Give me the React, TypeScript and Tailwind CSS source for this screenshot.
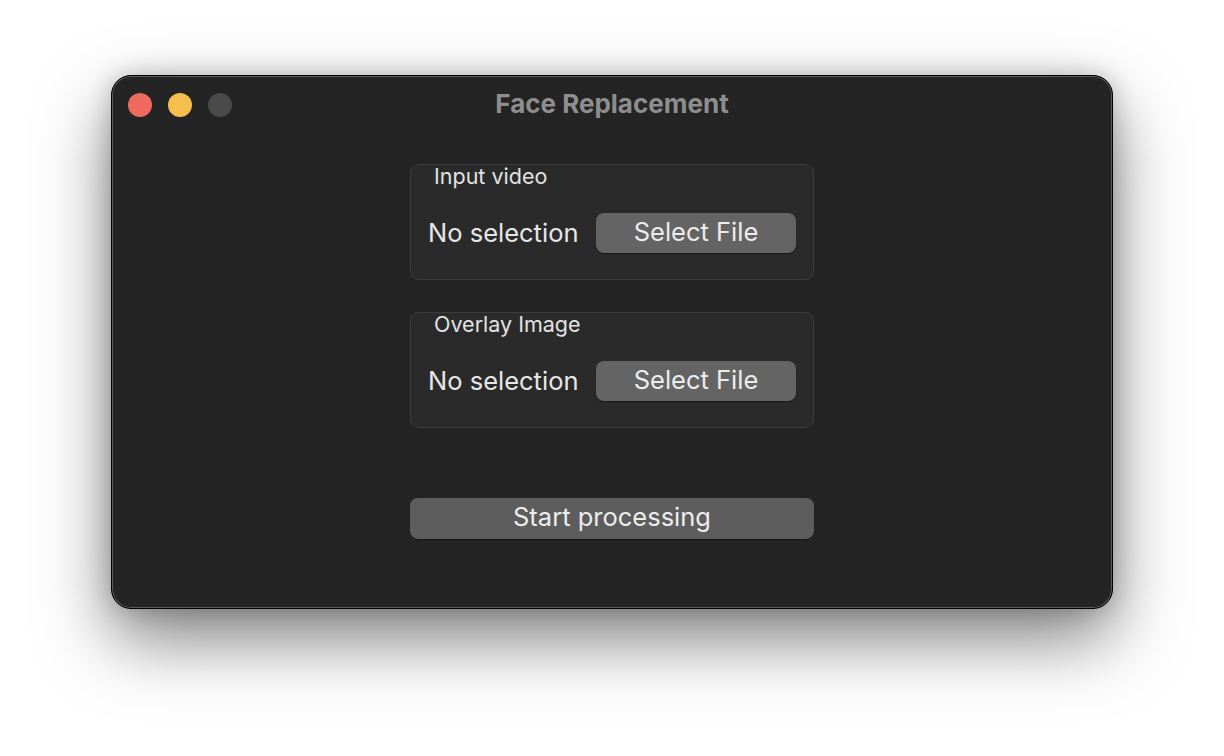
import React from "react";

function Group({ label }: { label: string }) {
  return (
    <div className="w-[404px] h-[116px] rounded-[9px] border border-[#3d3d3d] bg-[#2a2a2a] flex flex-col">
      <div className="h-[24px] pl-[23px] text-[21.5px] leading-[22px] text-[#e2e2e2]">{label}</div>
      <div className="mt-[23px] flex items-center pl-[17px] pr-[17px] justify-between">
        <span className="text-[25.5px] leading-[40px] text-[#e6e6e6] mt-[1px]">No selection</span>
        <button className="w-[200px] h-[40px] rounded-[8px] bg-[#646464] text-[25.5px] leading-[34px] pb-[2px] text-[#ececec] shadow-[0_1px_1px_rgba(0,0,0,0.4)]">
          Select File
        </button>
      </div>
    </div>
  );
}

export default function App() {
  return (
    <div
      className="w-[1224px] h-[756px] bg-white flex justify-center pt-[75px]"
      style={{ fontFamily: "Inter, 'Noto Sans', sans-serif" }}
    >
      <div className="w-[1002px] h-[534px] rounded-[20px] bg-[#242424] border border-black shadow-[inset_0_0_0_1px_#5c5c5c,0_30px_70px_rgba(0,0,0,0.5),0_0_24px_rgba(0,0,0,0.2)] flex flex-col">
        <div className="relative h-[57px] flex items-center pl-[16px]">
          <div className="flex gap-[16px]">
            <div className="w-[24px] h-[24px] rounded-full bg-[#ee6a5f]" />
            <div className="w-[24px] h-[24px] rounded-full bg-[#f5bf4f]" />
            <div className="w-[24px] h-[24px] rounded-full bg-[#4a4a4a]" />
          </div>
          <div className="absolute inset-x-0 top-0 h-[54px] flex items-center justify-center text-[26px] font-bold text-[#8e8e8e] pointer-events-none">
            Face Replacement
          </div>
        </div>
        <div className="flex flex-col items-center pt-[31px]">
          <Group label="Input video" />
          <div className="h-[32px]" />
          <Group label="Overlay Image" />
          <div className="h-[70px]" />
          <button className="w-[404px] h-[41px] rounded-[8px] bg-[#5d5d5d] text-[25.5px] leading-[34px] pb-[3px] text-[#ececec] shadow-[0_1px_1px_rgba(0,0,0,0.4)]">
            Start processing
          </button>
        </div>
      </div>
    </div>
  );
}
